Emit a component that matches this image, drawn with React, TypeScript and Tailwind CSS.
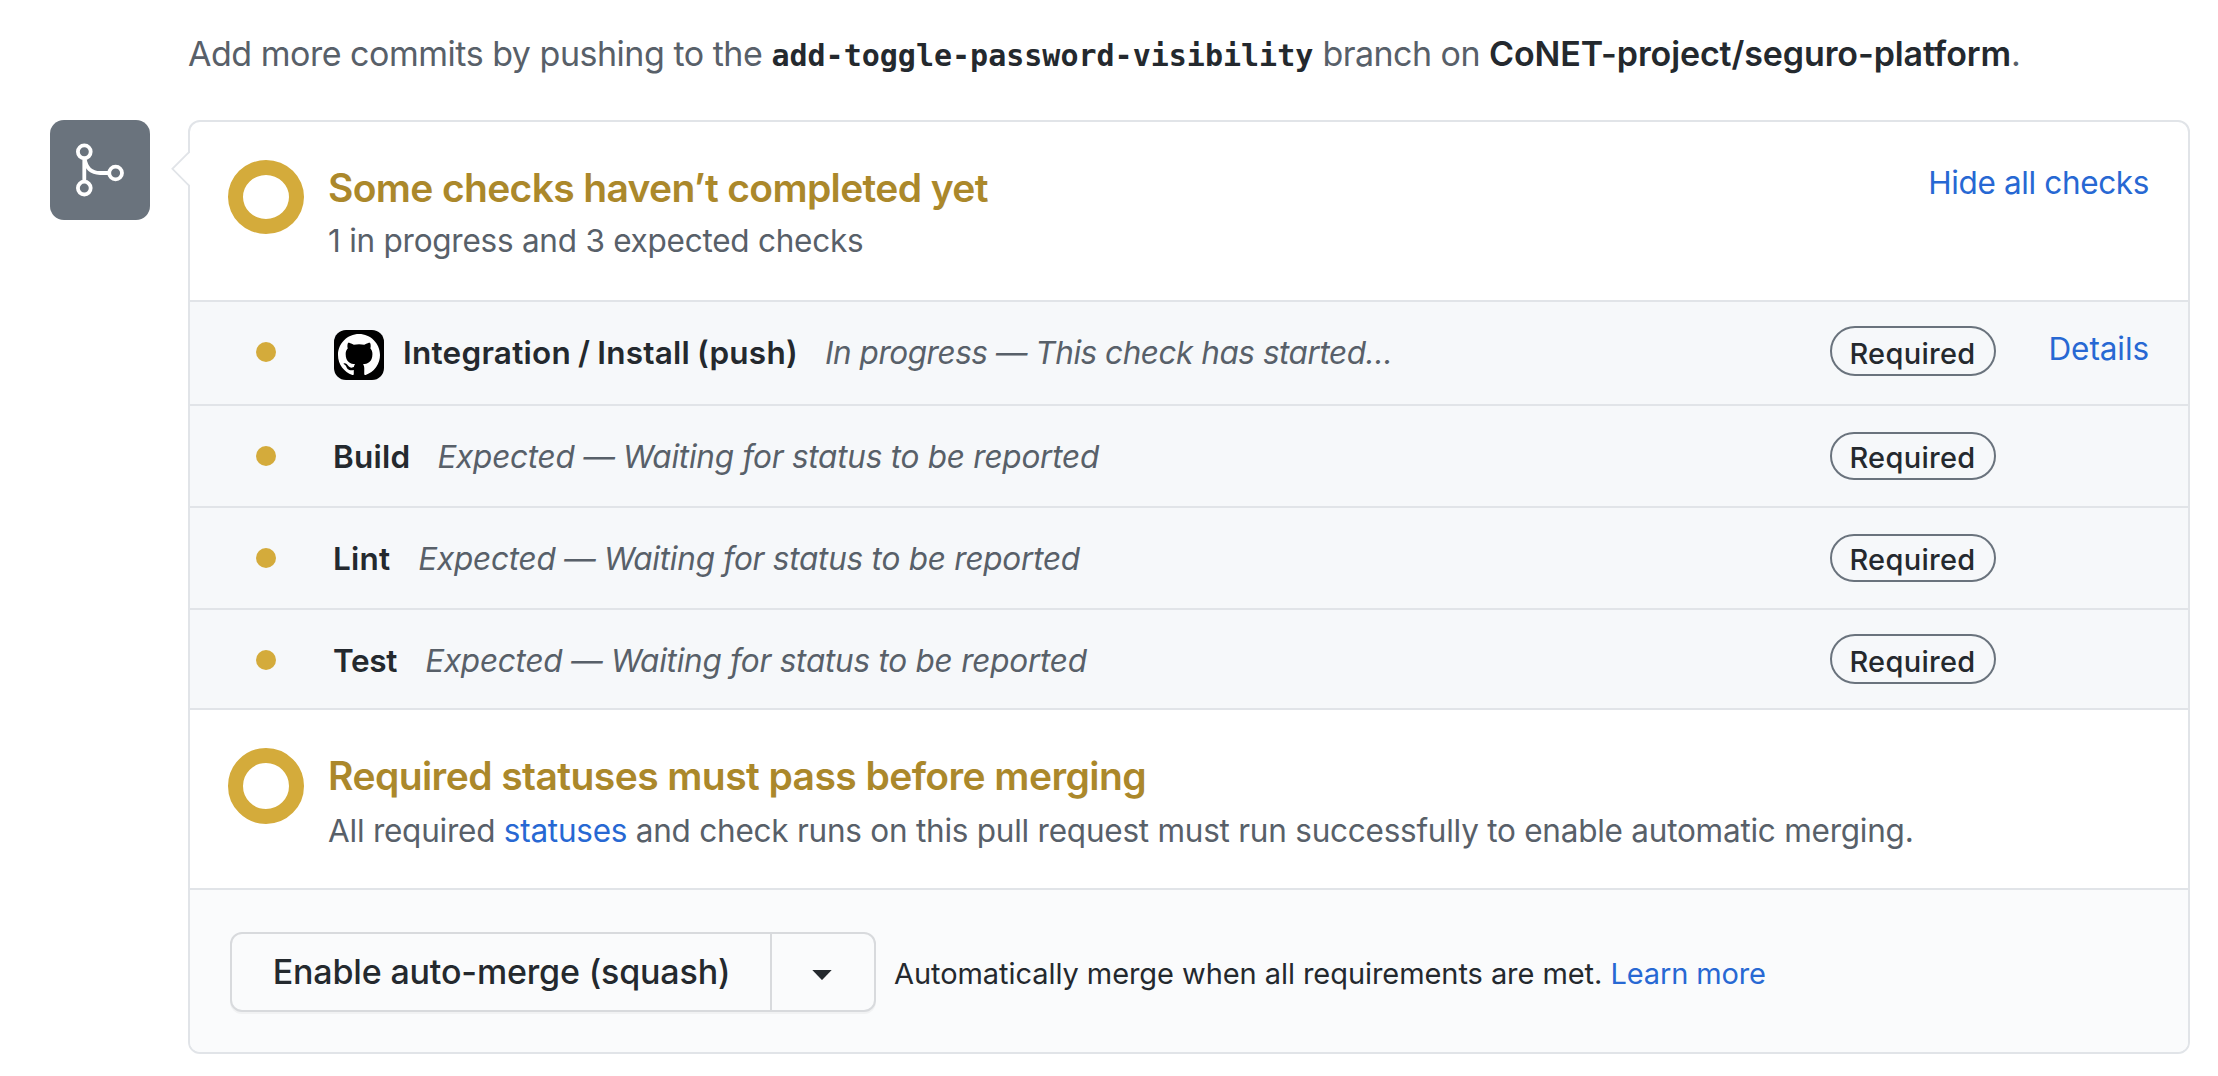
type Check = {
  name: string;
  nameClass: string;
  status: string;
  statusClass: string;
  rowClass: string;
  pillClass: string;
  avatar?: boolean;
  details?: boolean;
};

const checks: Check[] = [
  {
    name: "Integration / Install (push)",
    nameClass: "ml-[19px] tracking-[0.25px] [word-spacing:-1.2px]",
    status: "In progress — This check has started…",
    statusClass: "ml-[27px] tracking-[-0.46px]",
    rowClass: "h-[104px] border-b-2",
    pillClass: "mt-6 h-[50px] pt-[5px]",
    avatar: true,
    details: true,
  },
  {
    name: "Build",
    nameClass: "tracking-[0.24px]",
    status: "Expected — Waiting for status to be reported",
    statusClass: "ml-[27px] tracking-[-0.237px]",
    rowClass: "h-[102px] border-b-2",
    pillClass: "mt-[26px] h-12 pt-[3px]",
  },
  {
    name: "Lint",
    nameClass: "tracking-[0.22px]",
    status: "Expected — Waiting for status to be reported",
    statusClass: "ml-[28px] tracking-[-0.237px]",
    rowClass: "h-[102px] border-b-2",
    pillClass: "mt-[26px] h-12 pt-[3px]",
  },
  {
    name: "Test",
    nameClass: "tracking-[-0.3px]",
    status: "Expected — Waiting for status to be reported",
    statusClass: "ml-[28px] tracking-[-0.237px]",
    rowClass: "h-[98px]",
    pillClass: "mt-6 h-[50px] pt-[5px]",
  },
];

function MergeIcon() {
  return (
    <svg
      className="size-[100px]"
      viewBox="0 0 100 100"
      fill="none"
      stroke="white"
      strokeWidth="3.8"
    >
      <circle cx="34.3" cy="31.8" r="6.4" />
      <circle cx="34.3" cy="68.1" r="6.4" />
      <circle cx="65.6" cy="53" r="6.4" />
      <path d="M34.3 38.5V61.5" />
      <path d="M34.6 38.5C36 47.5 41 53 50 53H59" />
    </svg>
  );
}

function GitHubMark() {
  return (
    <svg className="size-[42px]" viewBox="0 0 16 16" fill="currentColor">
      <path d="M8 0C3.58 0 0 3.58 0 8c0 3.54 2.29 6.53 5.47 7.59.4.07.55-.17.55-.38 0-.19-.01-.82-.01-1.49-2.01.37-2.53-.49-2.69-.94-.09-.23-.48-.94-.82-1.13-.28-.15-.68-.52-.01-.53.63-.01 1.08.58 1.23.82.72 1.21 1.87.87 2.33.66.07-.52.28-.87.51-1.07-1.78-.2-3.64-.89-3.64-3.95 0-.87.31-1.59.82-2.15-.08-.2-.36-1.02.08-2.12 0 0 .67-.21 2.2.82.64-.18 1.32-.27 2-.27.68 0 1.36.09 2 .27 1.53-1.04 2.2-.82 2.2-.82.44 1.1.16 1.92.08 2.12.51.56.82 1.27.82 2.15 0 3.07-1.87 3.75-3.65 3.95.29.25.54.73.54 1.48 0 1.07-.01 1.93-.01 2.2 0 .21.15.46.55.38A8.013 8.013 0 0016 8c0-4.42-3.58-8-8-8z" />
    </svg>
  );
}

function CheckRow({ check }: { check: Check }) {
  return (
    <div className={`flex items-start border-[#e1e4e8] bg-[#f6f8fa] pl-[66px] pr-[39px] ${check.rowClass}`}>
      <span className="mt-10 size-5 rounded-full bg-[#d4ab3b]" />
      <div className="ml-[57px] flex flex-1 items-start text-[31.5px] leading-[41px]">
        {check.avatar && (
          <span className="ml-px mt-7 flex size-[50px] items-center justify-center rounded-xl bg-black text-white">
            <GitHubMark />
          </span>
        )}
        <span className={`mt-[30px] font-semibold text-[#24292e] ${check.nameClass}`}>{check.name}</span>
        <span className={`mt-[30px] italic text-[#586069] ${check.statusClass}`}>{check.status}</span>
      </div>
      <span
        className={`flex w-[166px] items-start justify-center rounded-full border-2 border-[#6a737d] pr-px text-[29px] font-medium leading-[41px] tracking-[0.3px] text-[#24292e] ${check.pillClass}`}
      >
        Required
      </span>
      <div className="w-[153px] pt-[26px] text-right text-[31.5px] leading-[41px] tracking-[-0.084px] text-[#2768d3]">
        {check.details && <a>Details</a>}
      </div>
    </div>
  );
}

export default function App() {
  return (
    <div className="h-[1076px] w-[2218px] bg-white pt-[33px] font-['Inter','Liberation_Sans',sans-serif]">
      <p className="h-[42px] pl-[188px] text-[34px] leading-[41px] tracking-[-0.481px] text-[#586069]">
        Add more commits by pushing to the{" "}
        <code className="font-['DejaVu_Sans_Mono',monospace] text-[30px] font-bold leading-none tracking-normal text-[#24292e]">
          add-toggle-password-visibility
        </code>{" "}
        <span className="tracking-[-0.534px]">branch on</span>{" "}
        <span className="font-semibold tracking-[-0.11px] text-[#24292e]">CoNET-project/seguro-platform</span>.
      </p>

      <div className="mt-[45px] flex items-start pl-[50px]">
        <div className="size-[100px] rounded-[14px] bg-[#6a737d]">
          <MergeIcon />
        </div>

        <div className="relative ml-[38px] h-[934px] w-[2002px] rounded-xl border-2 border-[#e1e4e8]">
          <svg className="absolute -left-[19px] top-[28px] h-[38px] w-[20px]" viewBox="0 0 20 38" fill="none">
            <path d="M20 1.5L2 18.8L20 36.5Z" fill="white" />
            <path d="M18.5 1.6L1.4 18.8L18.5 36.2" stroke="#e1e4e8" strokeWidth="1.8" />
          </svg>

          <div className="flex h-[180px] items-start border-b-2 border-[#e1e4e8] pl-[38px] pr-[39px]">
            <span className="mt-[38px] h-[74px] w-[76px] rounded-[50%] border-[15px] border-[#d4ab3b]" />
            <div className="ml-6 flex-1">
              <h3 className="mt-[42px] text-[39px] font-semibold leading-[47px] tracking-[-0.645px] text-[#ab882b]">
                Some checks haven’t completed yet
              </h3>
              <p className="mt-[9px] text-[31.5px] leading-[41px] tracking-[-0.249px] text-[#586069]">
                1 in progress and 3 expected checks
              </p>
            </div>
            <a className="mt-10 text-[31.5px] leading-[41px] tracking-[-0.36px] text-[#2768d3]">Hide all checks</a>
          </div>

          {checks.map((check) => (
            <CheckRow key={check.name} check={check} />
          ))}

          <div className="flex h-[182px] items-start border-y-2 border-[#e1e4e8] pl-[38px]">
            <span className="mt-[38px] size-[76px] rounded-full border-[15px] border-[#d4ab3b]" />
            <div className="ml-6 flex-1">
              <h3 className="mt-[42px] text-[39px] font-semibold leading-[47px] tracking-[-0.565px] text-[#ab882b]">
                Required statuses must pass before merging
              </h3>
              <p className="mt-[11px] text-[31.5px] leading-[41px] tracking-[-0.242px] text-[#586069]">
                All required <a className="text-[#2768d3]">statuses</a> and check runs on this pull request must run
                successfully to enable automatic merging.
              </p>
            </div>
          </div>

          <div className="flex h-[162px] items-start rounded-b-[10px] bg-[#fafbfc] pl-10 pt-[42px]">
            <div className="flex h-20 w-[646px] rounded-xl border-2 border-[#d8dadd] bg-[#fafbfc] shadow-[0_2px_0_rgba(27,31,35,0.04)]">
              <button className="w-[540px] border-r-2 border-[#d8dadd] pb-px pl-px text-[34px] font-medium leading-[41px] tracking-[-0.16px] text-[#24292e]">
                Enable auto-merge (squash)
              </button>
              <button className="flex flex-1 items-center justify-center">
                <svg className="mr-0.5 mt-1.5 h-[10px] w-5" viewBox="0 0 20 10" fill="#24292e">
                  <path d="M.3 0H19.7L10.6 9.6Q10 10.2 9.4 9.6Z" />
                </svg>
              </button>
            </div>
            <p className="ml-[18px] mt-[21px] text-[29px] leading-[41px] tracking-[-0.065px] text-[#24292e]">
              Automatically merge when all requirements are met.{" "}
              <a className="tracking-[-0.12px] text-[#2768d3]">Learn more</a>
            </p>
          </div>
        </div>
      </div>
    </div>
  );
}
